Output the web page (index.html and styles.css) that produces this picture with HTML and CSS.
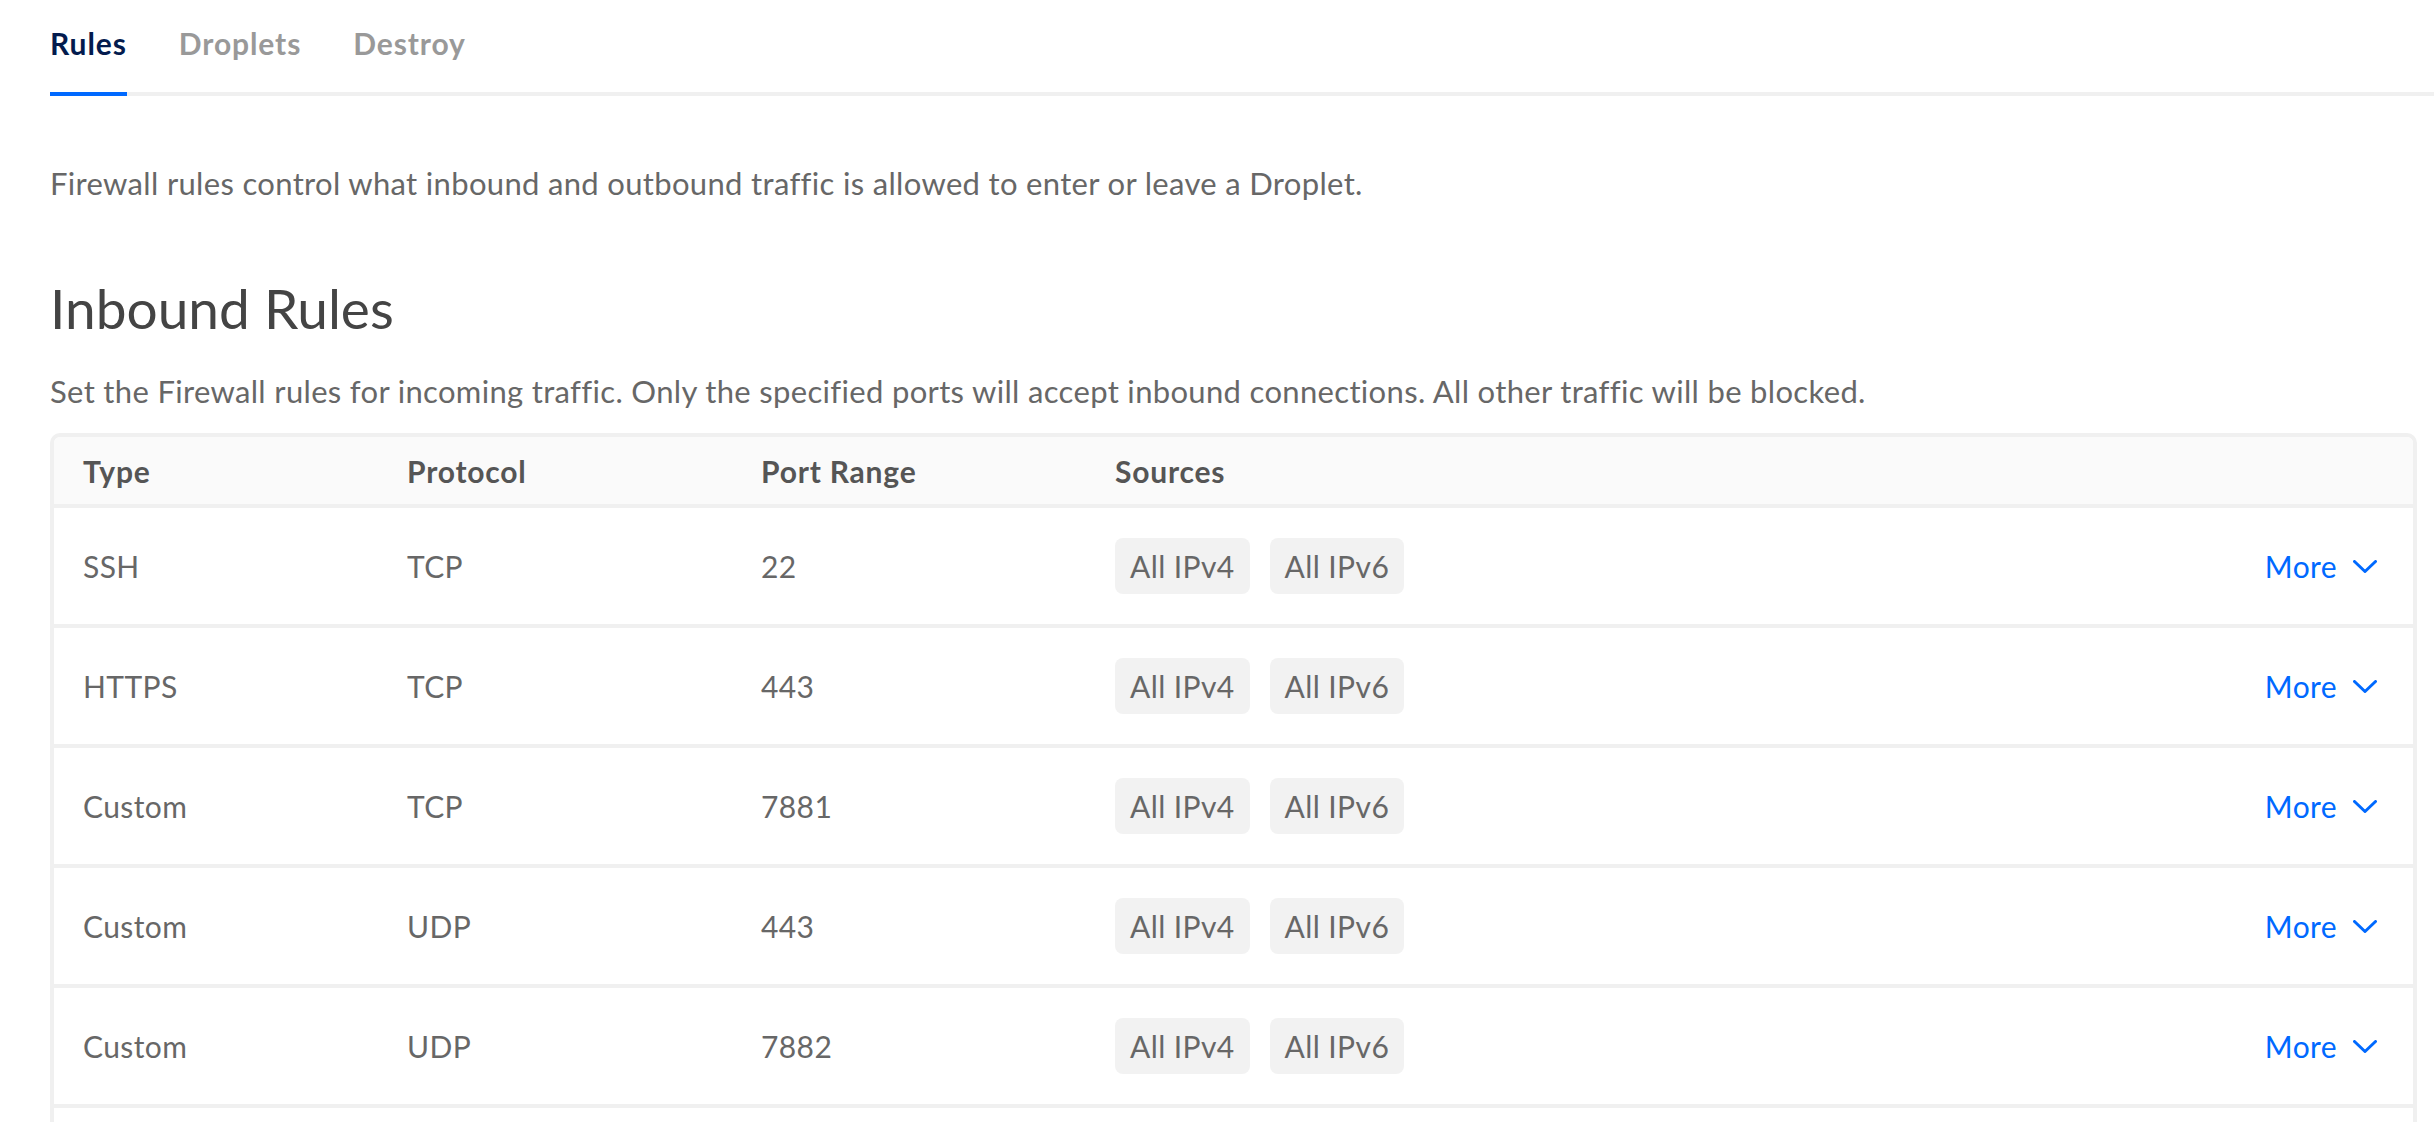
FILE: index.html
```html
<!DOCTYPE html>
<html lang="en">
<head>
<meta charset="utf-8">
<title>Firewall Rules</title>
<link rel="stylesheet" href="styles.css">
</head>
<body>
<nav class="tabs">
  <a class="tab tab-active">Rules</a>
  <a class="tab">Droplets</a>
  <a class="tab">Destroy</a>
</nav>
<main class="content">
  <p class="intro">Firewall rules control what inbound and outbound traffic is allowed to enter or leave a Droplet.</p>
  <h2 class="section-title">Inbound Rules</h2>
  <p class="section-desc">Set the Firewall rules for incoming traffic. Only the specified ports will accept inbound connections. All other traffic will be blocked.</p>
  <div class="rules-table">
    <div class="row row-head">
      <div class="cell">Type</div>
      <div class="cell">Protocol</div>
      <div class="cell">Port Range</div>
      <div class="cell cell-sources">Sources</div>
      <div class="cell"></div>
    </div>
    <div class="row">
      <div class="cell">SSH</div>
      <div class="cell">TCP</div>
      <div class="cell">22</div>
      <div class="cell cell-sources"><span class="pill">All IPv4</span><span class="pill">All IPv6</span></div>
      <div class="cell"><a class="more">More <svg class="chev" viewBox="0 0 24 13" width="24" height="13"><polyline points="1.5,1.5 12,11.5 22.5,1.5"/></svg></a></div>
    </div>
    <div class="row">
      <div class="cell">HTTPS</div>
      <div class="cell">TCP</div>
      <div class="cell">443</div>
      <div class="cell cell-sources"><span class="pill">All IPv4</span><span class="pill">All IPv6</span></div>
      <div class="cell"><a class="more">More <svg class="chev" viewBox="0 0 24 13" width="24" height="13"><polyline points="1.5,1.5 12,11.5 22.5,1.5"/></svg></a></div>
    </div>
    <div class="row">
      <div class="cell">Custom</div>
      <div class="cell">TCP</div>
      <div class="cell">7881</div>
      <div class="cell cell-sources"><span class="pill">All IPv4</span><span class="pill">All IPv6</span></div>
      <div class="cell"><a class="more">More <svg class="chev" viewBox="0 0 24 13" width="24" height="13"><polyline points="1.5,1.5 12,11.5 22.5,1.5"/></svg></a></div>
    </div>
    <div class="row">
      <div class="cell">Custom</div>
      <div class="cell">UDP</div>
      <div class="cell">443</div>
      <div class="cell cell-sources"><span class="pill">All IPv4</span><span class="pill">All IPv6</span></div>
      <div class="cell"><a class="more">More <svg class="chev" viewBox="0 0 24 13" width="24" height="13"><polyline points="1.5,1.5 12,11.5 22.5,1.5"/></svg></a></div>
    </div>
    <div class="row">
      <div class="cell">Custom</div>
      <div class="cell">UDP</div>
      <div class="cell">7882</div>
      <div class="cell cell-sources"><span class="pill">All IPv4</span><span class="pill">All IPv6</span></div>
      <div class="cell"><a class="more">More <svg class="chev" viewBox="0 0 24 13" width="24" height="13"><polyline points="1.5,1.5 12,11.5 22.5,1.5"/></svg></a></div>
    </div>
    <div class="row row-partial"></div>
  </div>
</main>
</body>
</html>
```

FILE: styles.css
```css
html, body {
  margin: 0;
  padding: 0;
  background: #ffffff;
}

body {
  font-family: Lato, "Liberation Sans", sans-serif;
  color: #676767;
}

.tabs {
  display: flex;
  gap: 52px;
  margin-left: 50px;
  border-bottom: 4px solid #f0f0f0;
}

.tab {
  display: block;
  padding: 23px 0 29px;
  font-size: 30px;
  line-height: 40px;
  letter-spacing: 0.9px;
  font-weight: 700;
  color: #999999;
  margin-bottom: -4px;
  border-bottom: 4px solid transparent;
}

.tab-active {
  color: #031b4e;
  border-bottom-color: #0069ff;
}

.content {
  padding: 0 17px 0 50px;
}

.intro {
  margin: 65px 0 0;
  font-size: 31px;
  line-height: 44px;
  letter-spacing: 0.33px;
}

.section-title {
  margin: 71px 0 0;
  font-size: 55px;
  line-height: 64px;
  font-weight: 400;
  color: #444444;
}

.section-desc {
  margin: 29px 0 0;
  font-size: 31px;
  line-height: 44px;
  letter-spacing: 0.33px;
}

.rules-table {
  margin-top: 20px;
  border: 4px solid #f0f0f0;
  border-bottom: none;
  border-radius: 10px 10px 0 0;
  overflow: hidden;
}

.row {
  display: grid;
  grid-template-columns: 324px 354px 354px 1fr auto;
  align-items: center;
  height: 116px;
  padding: 0 36px 0 29px;
  border-bottom: 4px solid #f0f0f0;
  font-size: 30px;
  letter-spacing: 0.4px;
}

.row-head {
  height: 67px;
  background: #fafafa;
  font-weight: 700;
  letter-spacing: 0.8px;
  color: #555555;
}

.row-partial {
  border-bottom: none;
}

.cell-sources {
  display: flex;
  gap: 20px;
}

.pill {
  display: inline-flex;
  align-items: center;
  height: 56px;
  padding: 0 15px;
  border-radius: 8px;
  background: #f2f2f2;
  color: #676767;
}

.more {
  display: flex;
  align-items: center;
  gap: 16px;
  color: #0069ff;
}

.chev {
  fill: none;
  stroke: #0069ff;
  stroke-width: 3;
  stroke-linecap: round;
  stroke-linejoin: round;
}
```
